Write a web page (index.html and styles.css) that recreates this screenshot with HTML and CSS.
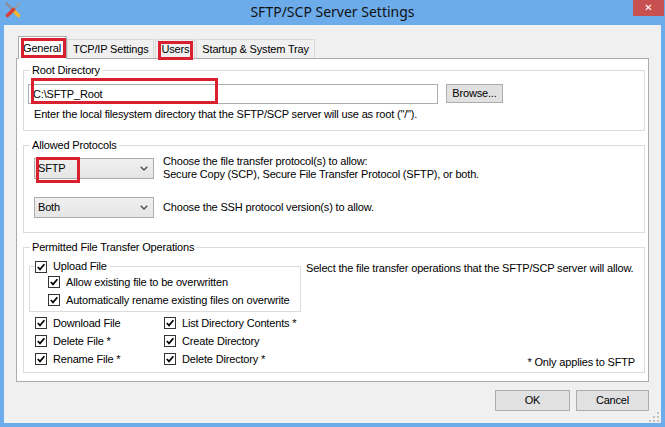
FILE: index.html
```html
<!DOCTYPE html>
<html>
<head>
<meta charset="utf-8">
<title>SFTP/SCP Server Settings</title>
<link rel="stylesheet" href="styles.css">
</head>
<body>
<div class="window">
  <div class="titlebar">
    <svg class="app-icon" viewBox="0 0 16 16" width="16" height="16">
      <line x1="1.5" y1="1.5" x2="8" y2="8" stroke="#8c8c8c" stroke-width="2.2" stroke-linecap="round"/>
      <line x1="8.5" y1="8.5" x2="13.5" y2="13.5" stroke="#f2b630" stroke-width="3.6" stroke-linecap="round"/>
      <line x1="14.5" y1="1.5" x2="9" y2="7" stroke="#9a9a9a" stroke-width="1.6" stroke-linecap="round"/>
      <line x1="8.5" y1="7.5" x2="2.5" y2="13.5" stroke="#d8413a" stroke-width="3.6" stroke-linecap="round"/>
    </svg>
    <div class="title">SFTP/SCP Server Settings</div>
    <div class="close">&#x2715;</div>
  </div>
  <div class="frame">
    <div class="client">
      <div class="tabs">
        <div class="tab active">General<span class="mark mark-general"></span></div>
        <div class="tab">TCP/IP Settings</div>
        <div class="tab">Users<span class="mark mark-users"></span></div>
        <div class="tab">Startup &amp; System Tray</div>
      </div>
      <div class="panel">
        <fieldset class="group group-root">
          <legend>Root Directory</legend>
          <div class="path-row">
            <div class="textbox">C:\SFTP_Root<span class="mark mark-path"></span></div>
            <div class="button browse">Browse...</div>
          </div>
          <div class="hint">Enter the local filesystem directory that the SFTP/SCP server will use as root ("/").</div>
        </fieldset>

        <fieldset class="group group-protocols">
          <legend>Allowed Protocols</legend>
          <div class="proto-row proto-first">
            <div class="combo"><span>SFTP</span><svg class="chev" viewBox="0 0 8 5" width="8" height="5"><polyline points="0.7,0.7 4,4 7.3,0.7" fill="none" stroke="#505050" stroke-width="1.4"/></svg><span class="mark mark-sftp"></span></div>
            <div class="proto-text">Choose the file transfer protocol(s) to allow:<br>Secure Copy (SCP), Secure File Transfer Protocol (SFTP), or both.</div>
          </div>
          <div class="proto-row proto-second">
            <div class="combo"><span>Both</span><svg class="chev" viewBox="0 0 8 5" width="8" height="5"><polyline points="0.7,0.7 4,4 7.3,0.7" fill="none" stroke="#505050" stroke-width="1.4"/></svg></div>
            <div class="proto-text">Choose the SSH protocol version(s) to allow.</div>
          </div>
        </fieldset>

        <fieldset class="group group-ops">
          <legend>Permitted File Transfer Operations</legend>
          <div class="ops-top">
            <fieldset class="upload">
              <legend class="check upload-legend"><span class="box"><svg viewBox="0 0 10 10" width="10" height="10"><polyline points="1.8,5 4,7.4 8.4,2.2" fill="none" stroke="#000" stroke-width="1.7"/></svg></span>Upload File</legend>
              <div class="check sub"><span class="box"><svg viewBox="0 0 10 10" width="10" height="10"><polyline points="1.8,5 4,7.4 8.4,2.2" fill="none" stroke="#000" stroke-width="1.7"/></svg></span>Allow existing file to be overwritten</div>
              <div class="check sub"><span class="box"><svg viewBox="0 0 10 10" width="10" height="10"><polyline points="1.8,5 4,7.4 8.4,2.2" fill="none" stroke="#000" stroke-width="1.7"/></svg></span>Automatically rename existing files on overwrite</div>
            </fieldset>
            <div class="ops-text">Select the file transfer operations that the SFTP/SCP server will allow.</div>
          </div>
          <div class="ops-bottom">
            <div class="ops-grid">
              <div class="check"><span class="box"><svg viewBox="0 0 10 10" width="10" height="10"><polyline points="1.8,5 4,7.4 8.4,2.2" fill="none" stroke="#000" stroke-width="1.7"/></svg></span>Download File</div>
              <div class="check"><span class="box"><svg viewBox="0 0 10 10" width="10" height="10"><polyline points="1.8,5 4,7.4 8.4,2.2" fill="none" stroke="#000" stroke-width="1.7"/></svg></span>List Directory Contents *</div>
              <div class="check"><span class="box"><svg viewBox="0 0 10 10" width="10" height="10"><polyline points="1.8,5 4,7.4 8.4,2.2" fill="none" stroke="#000" stroke-width="1.7"/></svg></span>Delete File *</div>
              <div class="check"><span class="box"><svg viewBox="0 0 10 10" width="10" height="10"><polyline points="1.8,5 4,7.4 8.4,2.2" fill="none" stroke="#000" stroke-width="1.7"/></svg></span>Create Directory</div>
              <div class="check"><span class="box"><svg viewBox="0 0 10 10" width="10" height="10"><polyline points="1.8,5 4,7.4 8.4,2.2" fill="none" stroke="#000" stroke-width="1.7"/></svg></span>Rename File *</div>
              <div class="check"><span class="box"><svg viewBox="0 0 10 10" width="10" height="10"><polyline points="1.8,5 4,7.4 8.4,2.2" fill="none" stroke="#000" stroke-width="1.7"/></svg></span>Delete Directory *</div>
            </div>
            <div class="note">* Only applies to SFTP</div>
          </div>
        </fieldset>
      </div>
      <div class="footer">
        <div class="button dlg-button ok">OK</div>
        <div class="button dlg-button cancel">Cancel</div>
      </div>
      <svg class="grip" viewBox="0 0 10 10" width="10" height="10">
        <rect x="8" y="0" width="2" height="2" fill="#c4c4c4"/>
        <rect x="4" y="4" width="2" height="2" fill="#c4c4c4"/>
        <rect x="8" y="4" width="2" height="2" fill="#c4c4c4"/>
        <rect x="0" y="8" width="2" height="2" fill="#c4c4c4"/>
        <rect x="4" y="8" width="2" height="2" fill="#c4c4c4"/>
        <rect x="8" y="8" width="2" height="2" fill="#c4c4c4"/>
      </svg>
    </div>
  </div>
</div>
</body>
</html>
```

FILE: styles.css
```css
* { box-sizing: border-box; }

html, body {
  margin: 0;
  padding: 0;
}

body {
  width: 665px;
  height: 427px;
  overflow: hidden;
  font-family: "Liberation Sans", Arial, sans-serif;
  font-size: 11px;
  line-height: 13px;
  letter-spacing: -0.17px;
  color: #000;
  background: #6caceb;
}

.window {
  width: 665px;
  height: 427px;
  display: flex;
  flex-direction: column;
  background: #6caceb;
}

/* ---------- title bar ---------- */
.titlebar {
  height: 25px;
  flex: none;
  display: grid;
  grid-template-columns: 1fr auto 1fr;
  align-items: start;
}

.app-icon {
  margin: 2px 0 0 5px;
  display: block;
}

.title {
  font-family: "Noto Sans", "Open Sans", sans-serif;
  font-size: 14px;
  line-height: 24px;
  letter-spacing: 0;
  color: #111;
  white-space: nowrap;
}

.close {
  justify-self: end;
  width: 31px;
  height: 16px;
  margin-right: 1px;
  background: #c75050;
  color: #fff;
  font-family: "DejaVu Sans", sans-serif;
  font-size: 10px;
  font-weight: bold;
  line-height: 15px;
  letter-spacing: 0;
  text-align: center;
}

/* ---------- frame & client ---------- */
.frame {
  flex: 1;
  min-width: 0;
  display: flex;
  padding: 0 4px 4px 4px;
}

.client {
  flex: 1;
  min-width: 0;
  position: relative;
  display: flex;
  flex-direction: column;
  background: #f0f0f0;
  padding: 11px 12px 0 12px;
}

/* ---------- tabs ---------- */
.tabs {
  position: relative;
  z-index: 1;
  height: 22px;
  display: flex;
  align-items: flex-end;
  margin-left: 2px;
}

.tab {
  position: relative;
  height: 19px;
  padding: 0 5px;
  display: flex;
  align-items: center;
  border: 1px solid #d9d9d9;
  border-bottom: none;
  background: #f0f0f0;
  white-space: nowrap;
}

.tab + .tab {
  margin-left: 1px;
}

.tab.active {
  height: 23px;
  margin-bottom: -1px;
  padding: 0 5px 0 4px;
  background: #fff;
  border-color: #acacac;
}

.tab.active + .tab {
  margin-left: 0;
}

/* ---------- red annotation marks ---------- */
.mark {
  position: absolute;
  border: 3px solid #d9202e;
  pointer-events: none;
}

.mark-general { left: 2px; top: 1px; right: 0; bottom: 1px; }
.mark-users { left: 2px; top: 1px; right: 1px; bottom: -2px; }
.mark-path { left: 2px; top: -7px; width: 187px; height: 26px; }
.mark-sftp { left: 1px; top: -2px; width: 44px; height: 26px; }

/* ---------- panel ---------- */
.panel {
  flex: none;
  min-width: 0;
  height: 324px;
  background: #fff;
  border: 1px solid #acacac;
  padding: 5px 3px 0 6px;
}

.group {
  margin: 0;
  border: 1px solid #dcdcdc;
  min-width: 0;
}

.group > legend {
  padding: 0 2px;
  line-height: 13px;
}

.group + .group {
  margin-top: 8px;
}

/* root directory */
.group-root {
  padding: 7px 4px 9px 4px;
}

.group-root > legend {
  margin-left: 2px;
}

.path-row {
  display: flex;
  align-items: flex-start;
}

.textbox {
  position: relative;
  width: 410px;
  height: 20px;
  padding: 0 4px;
  border: 1px solid #abadb3;
  background: #fff;
  line-height: 18px;
}

.button {
  display: flex;
  align-items: center;
  justify-content: center;
  background: #e1e1e1;
  border: 1px solid #adadad;
}

.browse {
  width: 57px;
  height: 19px;
  margin-left: 8px;
}

.hint {
  margin-top: 4px;
  padding-left: 6px;
  white-space: nowrap;
}

/* allowed protocols */
.group-protocols {
  padding: 3px 4px 14px 10px;
}

.group-protocols > legend {
  margin-left: -4px;
}

.proto-row {
  display: flex;
  align-items: center;
}

.proto-first {
  height: 26px;
}

.proto-second {
  margin-top: 16px;
  height: 21px;
}

.combo {
  position: relative;
  width: 120px;
  height: 21px;
  flex: none;
  display: flex;
  align-items: center;
  justify-content: space-between;
  padding: 0 5px 0 3px;
  border: 1px solid #acacac;
  background: linear-gradient(#f0f0f0, #e5e5e5);
}

.chev {
  display: block;
}

.proto-text {
  margin-left: 9px;
  white-space: nowrap;
}

/* permitted operations */
.group-ops {
  padding: 6px 9px 4px 5px;
}

.group-ops > legend {
  margin-left: 1px;
}

.ops-top {
  display: flex;
  align-items: flex-start;
}

.upload {
  width: 272px;
  flex: none;
  margin: 0;
  padding: 0 4px 2px 18px;
  border: 1px solid #dcdcdc;
  min-width: 0;
}

.upload-legend {
  margin-left: -13px;
  padding: 0 3px 0 0;
}

.check {
  display: flex;
  align-items: center;
  height: 18px;
  white-space: nowrap;
}

.upload-legend.check {
  height: 13px;
}

.box {
  width: 12px;
  height: 12px;
  flex: none;
  margin-right: 6px;
  border: 1px solid #333;
  background: #fff;
  display: flex;
  align-items: center;
  justify-content: center;
}

.box svg {
  display: block;
}

.ops-text {
  margin: 2px 0 0 5px;
  white-space: nowrap;
}

.ops-bottom {
  margin-top: 2px;
  display: flex;
  align-items: flex-end;
  justify-content: space-between;
}

.ops-grid {
  margin-left: 6px;
  display: grid;
  grid-template-columns: 129px auto;
}

.note {
  margin-bottom: -1px;
  white-space: nowrap;
}

/* footer */
.footer {
  display: flex;
  justify-content: flex-end;
  gap: 6px;
  margin-top: 8px;
}

.dlg-button {
  height: 21px;
}

.ok { width: 75px; }
.cancel { width: 73px; }

.grip {
  position: absolute;
  right: 2px;
  bottom: 1px;
  display: block;
}
```
